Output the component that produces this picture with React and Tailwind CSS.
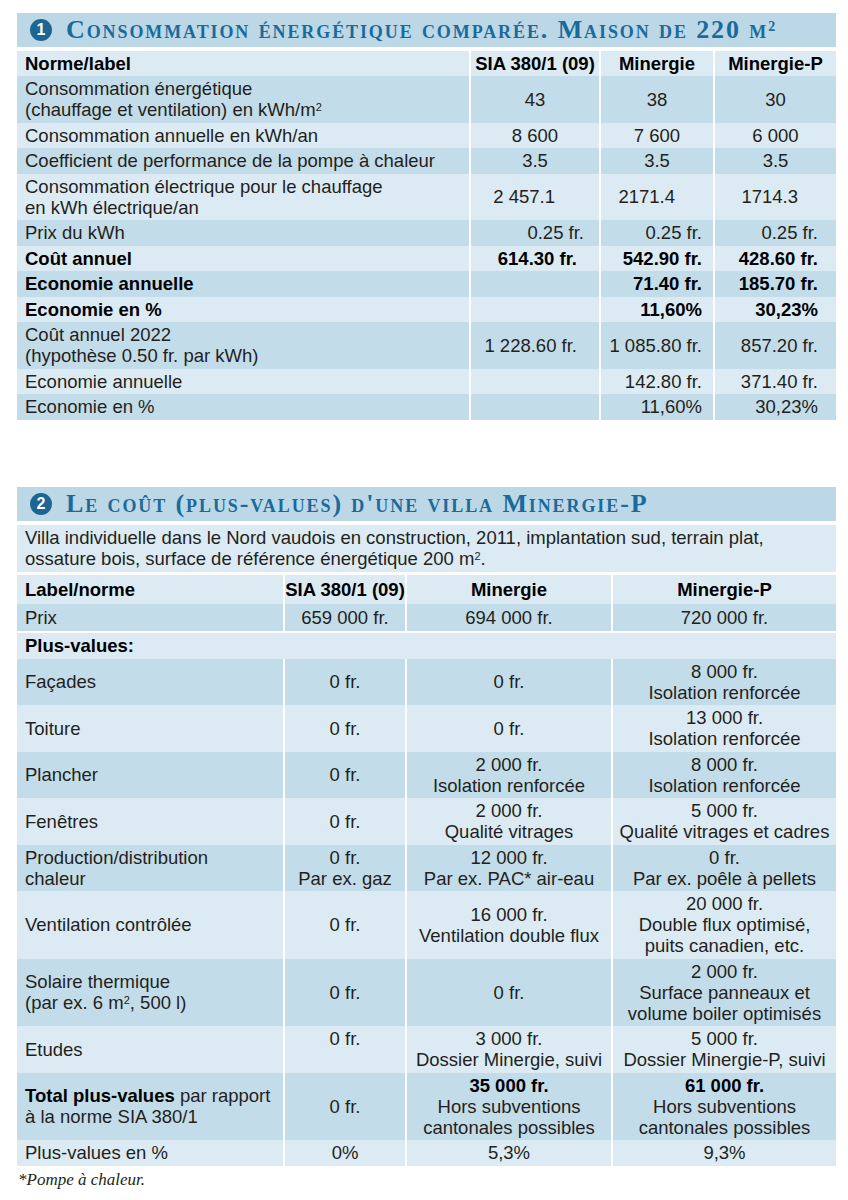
import React from "react";

const LIGHT = "bg-[#dcebf3]";
const DARK = "bg-[#c3dce9]";

const Title = ({ num, children }) => (
  <div className="flex items-center h-[34px] bg-[#bcd8e6] pl-[13px]">
    <span className="flex items-center justify-center w-[22px] h-[22px] rounded-full bg-[#1d6592] text-white text-[16px] font-bold font-['Liberation_Sans',sans-serif] leading-none">
      {num}
    </span>
    <h2 className="ml-[14px] font-['Liberation_Serif',serif] font-bold text-[26px] leading-none text-[#1b6a9b] [font-variant:small-caps] tracking-[1.9px]">
      {children}
    </h2>
  </div>
);

// table 1 : Consommation energetique
const C = "justify-center";
const t1 = [
  { label: <>Consommation énergétique<br />(chauffage et ventilation) en kWh/m<sup className="text-[11px]">2</sup></>, vals: ["43", "38", "30"], al: [C, C, C] },
  { label: "Consommation annuelle en kWh/an", vals: ["8 600", "7 600", "6 000"], al: [C, C, C] },
  { label: "Coefficient de performance de la pompe à chaleur", vals: ["3.5", "3.5", "3.5"], al: [C, C, C] },
  { label: <>Consommation électrique pour le chauffage<br />en kWh électrique/an</>, vals: ["2 457.1", "2171.4", "1714.3"], al: ["justify-end pr-[44px]", "justify-end pr-[38px]", "justify-end pr-[38px]"] },
  { label: "Prix du kWh", vals: ["0.25 fr.", "0.25 fr.", "0.25 fr."], al: ["justify-end pr-[15px]", "justify-end pr-[11px]", "justify-end pr-[18px]"] },
  { label: "Coût annuel", bold: true, vals: ["614.30 fr.", "542.90 fr.", "428.60 fr."], al: ["justify-end pr-[22px]", "justify-end pr-[11px]", "justify-end pr-[18px]"] },
  { label: "Economie annuelle", bold: true, vals: ["", "71.40 fr.", "185.70 fr."], al: [C, "justify-end pr-[11px]", "justify-end pr-[18px]"] },
  { label: "Economie en %", bold: true, vals: ["", "11,60%", "30,23%"], al: [C, "justify-end pr-[11px]", "justify-end pr-[18px]"] },
  { label: <>Coût annuel 2022<br />(hypothèse 0.50 fr. par kWh)</>, vals: ["1 228.60 fr.", "1 085.80 fr.", "857.20 fr."], al: ["justify-end pr-[22px]", "justify-end pr-[11px]", "justify-end pr-[18px]"] },
  { label: "Economie annuelle", vals: ["", "142.80 fr.", "371.40 fr."], al: [C, "justify-end pr-[11px]", "justify-end pr-[18px]"] },
  { label: "Economie en %", vals: ["", "11,60%", "30,23%"], al: [C, "justify-end pr-[11px]", "justify-end pr-[18px]"] },
];

const Table1 = () => (
  <div className="grid grid-cols-[452px_128px_112px_121px] gap-x-[2px] mt-[4px]">
    <div className={`${LIGHT} px-[8px] py-[2px] font-bold text-black`}>Norme/label</div>
    <div className={`${LIGHT} py-[2px] text-center font-bold text-black`}>SIA 380/1 (09)</div>
    <div className={`${LIGHT} py-[2px] text-center font-bold text-black`}>Minergie</div>
    <div className={`${LIGHT} py-[2px] text-center font-bold text-black`}>Minergie-P</div>
    {t1.map((r, i) => {
      const bg = i % 2 === 0 ? DARK : LIGHT;
      const w = r.bold ? "font-bold text-black" : "";
      return (
        <React.Fragment key={i}>
          <div className={`${bg} ${w} flex items-center px-[8px] py-[2.25px]`}>
            <div>{r.label}</div>
          </div>
          {r.vals.map((v, j) => (
            <div key={j} className={`${bg} ${w} flex items-center py-[2.25px] ${r.al[j]}`}>{v}</div>
          ))}
        </React.Fragment>
      );
    })}
  </div>
);

// table 2 : plus-values villa
const t2 = [
  { label: "Façades", vals: [["0 fr."], ["0 fr."], ["8 000 fr.", "Isolation renforcée"]] },
  { label: "Toiture", vals: [["0 fr."], ["0 fr."], ["13 000 fr.", "Isolation renforcée"]] },
  { label: "Plancher", vals: [["0 fr."], ["2 000 fr.", "Isolation renforcée"], ["8 000 fr.", "Isolation renforcée"]] },
  { label: "Fenêtres", vals: [["0 fr."], ["2 000 fr.", "Qualité vitrages"], ["5 000 fr.", "Qualité vitrages et cadres"]] },
  { label: <>Production/distribution<br />chaleur</>, vals: [["0 fr.", "Par ex. gaz"], ["12 000 fr.", "Par ex. PAC* air-eau"], ["0 fr.", "Par ex. poêle à pellets"]] },
  { label: "Ventilation contrôlée", vals: [["0 fr."], ["16 000 fr.", "Ventilation double flux"], ["20 000 fr.", "Double flux optimisé,", "puits canadien, etc."]] },
  { label: <>Solaire thermique<br />(par ex. 6 m<sup className="text-[11px]">2</sup>, 500 l)</>, vals: [["0 fr."], ["0 fr."], ["2 000 fr.", "Surface panneaux et", "volume boiler optimisés"]] },
  { label: "Etudes", vals: [["0 fr.", "\u00a0"], ["3 000 fr.", "Dossier Minergie, suivi"], ["5 000 fr.", "Dossier Minergie-P, suivi"]] },
  { label: <><b className="text-black">Total plus-values</b> par rapport<br />à la norme SIA 380/1</>, vals: [["0 fr."], [<b key="b" className="text-black">35 000 fr.</b>, "Hors subventions", "cantonales possibles"], [<b key="b" className="text-black">61 000 fr.</b>, "Hors subventions", "cantonales possibles"]] },
  { label: "Plus-values en %", vals: [["0%"], ["5,3%"], ["9,3%"]] },
];

const Table2 = () => (
  <div className="mt-[4px]">
    <div className={`${LIGHT} px-[8px] py-[2.5px]`}>
      Villa individuelle dans le Nord vaudois en construction, 2011, implantation sud, terrain plat,<br />
      ossature bois, surface de référence énergétique 200 m<sup className="text-[11px]">2</sup>.
    </div>
    <div className="grid grid-cols-[266px_120px_204px_223px] gap-x-[2px] mt-[3px]">
      <div className={`${LIGHT} px-[8px] py-[4px] font-bold text-black`}>Label/norme</div>
      <div className={`${LIGHT} py-[4px] text-center font-bold text-black`}>SIA 380/1 (09)</div>
      <div className={`${LIGHT} py-[4px] text-center font-bold text-black`}>Minergie</div>
      <div className={`${LIGHT} py-[4px] text-center font-bold text-black`}>Minergie-P</div>
      <div className={`${DARK} px-[8px] py-[3px]`}>Prix</div>
      <div className={`${DARK} py-[3px] text-center`}>659 000 fr.</div>
      <div className={`${DARK} py-[3px] text-center`}>694 000 fr.</div>
      <div className={`${DARK} py-[3px] text-center`}>720 000 fr.</div>
    </div>
    <div className={`${LIGHT} mt-[2px] px-[8px] py-[2.5px] font-bold text-black`}>Plus-values:</div>
    <div className="grid grid-cols-[266px_120px_204px_223px] gap-x-[2px]">
      {t2.map((r, i) => {
        const bg = i % 2 === 0 ? DARK : LIGHT;
        return (
          <React.Fragment key={i}>
            <div className={`${bg} flex items-center px-[8px] py-[2.25px]`}>
              <div>{r.label}</div>
            </div>
            {r.vals.map((v, j) => (
              <div key={j} className={`${bg} flex flex-col items-center justify-center py-[2.25px] text-center`}>
                {v.map((line, k) => (
                  <div key={k}>{line}</div>
                ))}
              </div>
            ))}
          </React.Fragment>
        );
      })}
    </div>
  </div>
);

export default function App() {
  return (
    <div className="min-h-[1200px] bg-white pt-[13px] pl-[17px] font-['Liberation_Sans',Arial,sans-serif] text-[18.5px] leading-[21px] text-[#231f20]">
      <div className="w-[819px]">
        <Title num="1">
          Consommation énergétique comparée. Maison de 220 m<sup className="text-[14px]">2</sup>
        </Title>
        <Table1 />

        <div className="mt-[67px]">
          <Title num="2">Le coût (plus-values) d'une villa Minergie-P</Title>
        </div>
        <Table2 />

        <p className="mt-[4px] ml-[1px] font-['Liberation_Serif',serif] italic text-[17px] leading-[20px] text-[#231f20]">
          *Pompe à chaleur.
        </p>
      </div>
    </div>
  );
}
